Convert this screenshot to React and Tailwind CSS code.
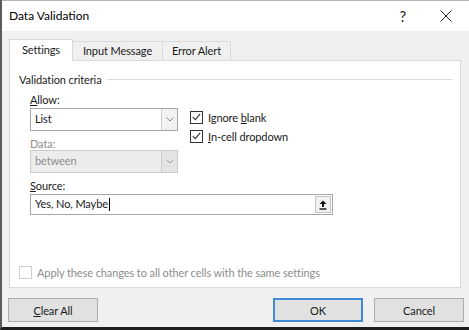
import React from "react";

const Check = () => (
    <svg width="9" height="8" viewBox="0 0 9 8" className="block">
        <path d="M0.8 4.2 L3.3 6.6 L8.2 0.8" fill="none" stroke="#333" strokeWidth="1.1" />
    </svg>
);

const Chevron = ({ color = "#8a8a8a" }) => (
    <svg width="8" height="5" viewBox="0 0 8 5" className="block">
        <path d="M0.5 0.5 L4 4 L7.5 0.5" fill="none" stroke={color} strokeWidth="1" />
    </svg>
);

const CheckRow = ({ children }) => (
    <div className="flex items-center h-[14px]">
        <div className="w-[13px] h-[13px] border border-[#333] bg-white flex items-center justify-center">
            <Check />
        </div>
        <span className="ml-[5px] leading-none">{children}</span>
    </div>
);

const Btn = ({ children, primary }) => (
    <button
        className={`w-[90px] h-[24px] flex items-center justify-center leading-none ${primary ? "border-2 border-[#3d8ad6] bg-[#e1e1e1]" : "border border-[#adadad] bg-[#e1e1e1]"}`}
    >
        {children}
    </button>
);

export default function App() {
    return (
        <div className="w-[469px] h-[330px] bg-[#f0f0f0] border-l-2 border-[#5c5c5c] border-b-[3px] border-b-[#1e1e1e] flex flex-col text-[11px] tracking-[-0.1px] text-[#1a1a1a] font-['Lato','Noto_Sans',sans-serif] overflow-hidden">
            {/* Title bar */}
            <div className="h-[31px] flex-none bg-white border-t border-[#b5b5b5] flex items-center pl-[7px]">
                <span className="text-[12px] tracking-normal text-black">Data Validation</span>
                <span className="ml-auto mr-[34px] text-[15px] leading-none text-[#222]">?</span>
                <svg width="12" height="12" viewBox="0 0 12 12" className="mr-[17px]">
                    <path d="M0.5 0.5 L11.5 11.5 M11.5 0.5 L0.5 11.5" stroke="#222" strokeWidth="1" />
                </svg>
            </div>

            {/* Tabs */}
            <div className="h-[29px] flex-none flex items-end pl-[7px]">
                <div className="h-[22px] w-[64px] bg-white border border-b-0 border-[#d9d9d9] flex items-center justify-center relative z-10 -mb-px pb-[1px]">
                    Settings
                </div>
                <div className="h-[19px] w-[90px] bg-[#f0f0f0] border border-l-0 border-b-0 border-[#d9d9d9] flex items-center justify-center">
                    Input Message
                </div>
                <div className="h-[19px] w-[68px] bg-[#f0f0f0] border border-l-0 border-b-0 border-[#d9d9d9] flex items-center justify-center">
                    Error Alert
                </div>
            </div>

            {/* Panel */}
            <div className="ml-[7px] w-[452px] h-[228px] flex-none bg-white border border-[#d9d9d9] flex flex-col pt-[10px]">
                <div className="h-[16px] flex items-center pl-[9px] pr-[7px]">
                    <span className="leading-none">Validation criteria</span>
                    <div className="flex-1 ml-[5px] h-px bg-[#dcdcdc] mt-[1px]" />
                </div>

                <div className="flex pl-[20px]">
                    <div className="w-[148px] flex flex-col">
                        <div className="h-[14px] mt-[5px] leading-none flex items-center">
                            <span><u>A</u>llow:</span>
                        </div>
                        <div className="mt-[2px] h-[23px] border border-[#a6a6a6] bg-white flex">
                            <span className="flex-1 pl-[4px] flex items-center">List</span>
                            <div className="w-[16px] bg-[#f2f2f2] border-l border-[#cfcfcf] flex items-center justify-center">
                                <Chevron />
                            </div>
                        </div>
                        <div className="h-[14px] mt-[5px] leading-none flex items-center text-[#8d8d8d]">Data:</div>
                        <div className="mt-[0px] h-[23px] border border-[#cccccc] bg-[#ececec] flex">
                            <span className="flex-1 pl-[4px] flex items-center text-[#8d8d8d]">between</span>
                            <div className="w-[16px] bg-[#e4e4e4] border-l border-[#cccccc] flex items-center justify-center">
                                <Chevron color="#a0a0a0" />
                            </div>
                        </div>
                    </div>
                    <div className="ml-[12px] pt-[23px] flex flex-col gap-[5px]">
                        <CheckRow>Ignore <u>b</u>lank</CheckRow>
                        <CheckRow><u>I</u>n-cell dropdown</CheckRow>
                    </div>
                </div>

                <div className="pl-[20px] flex flex-col">
                    <div className="h-[14px] mt-[5px] leading-none flex items-center">
                        <span><u>S</u>ource:</span>
                    </div>
                    <div className="mt-[2px] w-[303px] h-[21px] border border-[#a6a6a6] bg-white flex items-center">
                        <span className="pl-[4px]">Yes, No, Maybe</span>
                        <span className="w-px h-[13px] bg-black ml-[1px]" />
                        <div className="ml-auto mr-[1px] w-[16px] h-[17px] border border-[#c4c4c4] bg-[#f2f2f2] flex items-center justify-center">
                            <svg width="8" height="10" viewBox="0 0 8 10" className="block">
                                <path d="M4 0.5 L7.5 4 L5 4 L5 7 L3 7 L3 4 L0.5 4 Z" fill="#111" />
                                <rect x="0.5" y="8.3" width="7" height="1.4" fill="#111" />
                            </svg>
                        </div>
                    </div>
                </div>

                <div className="mt-[50px] pl-[9px] flex items-center h-[14px]">
                    <div className="w-[13px] h-[13px] border border-[#cfcfcf] bg-white" />
                    <span className="ml-[5px] text-[#8d8d8d] leading-none">Apply these changes to all other cells with the same settings</span>
                </div>
            </div>

            {/* Buttons */}
            <div className="flex items-center pl-[6px] pr-[5px] mt-[10px]">
                <Btn><span><u>C</u>lear All</span></Btn>
                <div className="flex-1" />
                <Btn primary>OK</Btn>
                <div className="w-[11px]" />
                <Btn>Cancel</Btn>
            </div>
        </div>
    );
}
